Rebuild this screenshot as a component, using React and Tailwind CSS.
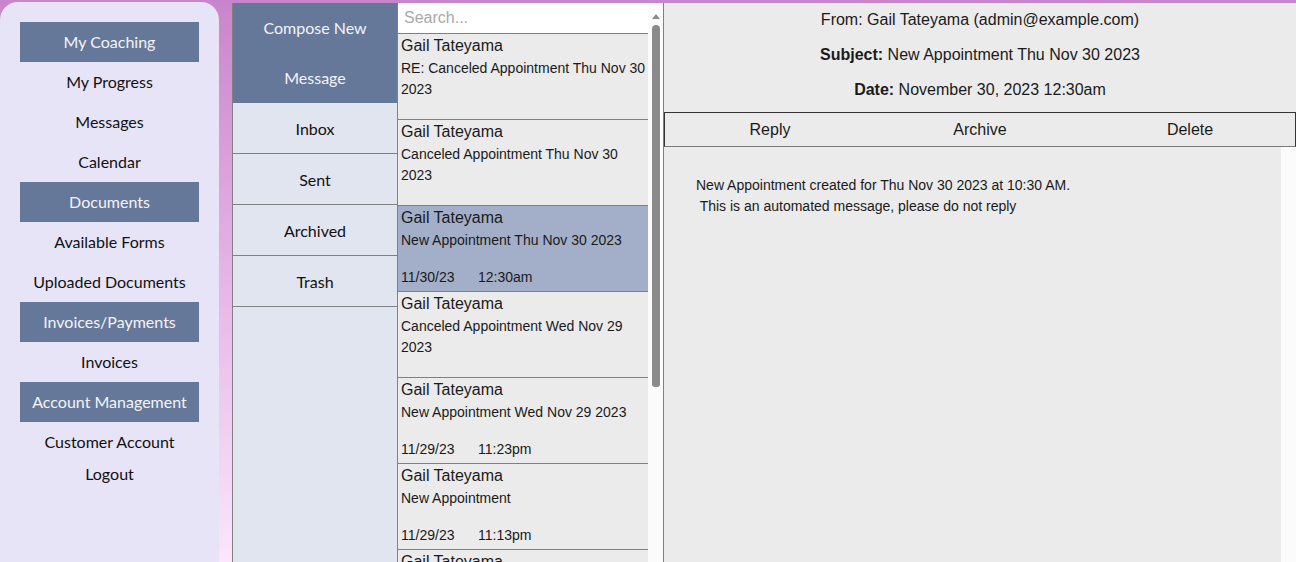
import React from "react";

const NAV = [
  { label: "My Coaching", head: true },
  { label: "My Progress" },
  { label: "Messages" },
  { label: "Calendar" },
  { label: "Documents", head: true },
  { label: "Available Forms" },
  { label: "Uploaded Documents" },
  { label: "Invoices/Payments", head: true },
  { label: "Invoices" },
  { label: "Account Management", head: true },
  { label: "Customer Account" },
];

const FOLDERS = ["Inbox", "Sent", "Archived", "Trash"];

const MESSAGES = [
  { from: "Gail Tateyama", subject: "RE: Canceled Appointment Thu Nov 30 2023" },
  { from: "Gail Tateyama", subject: "Canceled Appointment Thu Nov 30 2023" },
  { from: "Gail Tateyama", subject: "New Appointment Thu Nov 30 2023", date: "11/30/23", time: "12:30am", active: true },
  { from: "Gail Tateyama", subject: "Canceled Appointment Wed Nov 29 2023" },
  { from: "Gail Tateyama", subject: "New Appointment Wed Nov 29 2023", date: "11/29/23", time: "11:23pm" },
  { from: "Gail Tateyama", subject: "New Appointment", date: "11/29/23", time: "11:13pm" },
  { from: "Gail Tateyama", subject: "New Appointment Wed Nov 29 2023" },
];

const lato = "font-['Lato','Liberation_Sans',sans-serif]";
const arial = "font-['Liberation_Sans',Arial,sans-serif]";

export default function App() {
  return (
    <div className="h-[562px] w-[1296px] overflow-hidden flex bg-gradient-to-b from-[#c985cb] via-[#e6b5e6] to-[#fbe6fb]">
      {/* Sidebar */}
      <div className={`w-[219px] mt-[2px] rounded-t-[18px] bg-[#e8e4f8] pt-5 flex flex-col items-center text-[16px] text-[#111] ${lato}`}>
        {NAV.map((item) => (
          <div
            key={item.label}
            className={`w-[179px] h-10 flex items-center justify-center ${item.head ? "bg-[#65789a] text-[#f4f4f8]" : ""}`}
          >
            {item.label}
          </div>
        ))}
        <div className="h-6 flex items-center">Logout</div>
      </div>

      <div className="ml-[13px] mt-[3px] flex flex-1 min-w-0">
        {/* Folders */}
        <div className={`w-[166px] border-x border-[#808080] bg-[#e1e5ef] text-[16px] text-[#111] ${lato}`}>
          <div className="h-[100px] bg-[#65789a] text-[#f4f4f8] text-center leading-[50px]">
            Compose New
            <br />
            Message
          </div>
          {FOLDERS.map((f) => (
            <div key={f} className="h-[51px] border-b border-[#808080] flex items-center justify-center pt-[1px]">
              {f}
            </div>
          ))}
        </div>

        {/* Message list */}
        <div className={`w-[250px] flex flex-col ${arial}`}>
          <div className="h-[31px] shrink-0 bg-white border-b border-[#808080] pl-[6px] text-[16px] leading-[29px] text-[#a8a8a8]">
            Search...
          </div>
          {MESSAGES.map((m, i) => (
            <div
              key={i}
              className={`h-[86px] shrink-0 border-b border-[#808080] pl-[3px] pt-[1px] text-[#1a1a1a] ${m.active ? "bg-[#a3afc8]" : "bg-[#ebebeb]"}`}
            >
              <div className="h-[22px] text-[16px] leading-[22px]">{m.from}</div>
              <div className="h-[36px] mt-[1px] text-[14px] leading-[21px]">{m.subject}</div>
              {m.date && (
                <div className="mt-[1px] text-[14px] leading-[21px]">
                  <span className="inline-block w-[77px]">{m.date}</span>
                  {m.time}
                </div>
              )}
            </div>
          ))}
        </div>

        {/* Fake scrollbar */}
        <div className="w-[15px] bg-[#fbfbfb] flex flex-col items-center pt-[11px]">
          <div className="w-0 h-0 border-x-[4px] border-x-transparent border-b-[5px] border-b-[#8a8a8a]" />
          <div className="mt-[6px] w-[8px] h-[362px] rounded-t-[4px] rounded-b-[3px] bg-[#8a8a8a]" />
        </div>

        {/* Detail */}
        <div className={`flex-1 border-l border-[#808080] bg-[#ebebeb] flex flex-col text-[#1a1a1a] ${arial}`}>
          <div className="h-[109px] shrink-0 text-center text-[16px] leading-[35px]">
            <p className="-mt-[1.5px]">From: Gail Tateyama (admin@example.com)</p>
            <p>
              <b>Subject:</b> New Appointment Thu Nov 30 2023
            </p>
            <p>
              <b>Date:</b> November 30, 2023 12:30am
            </p>
          </div>
          <div className="h-[35px] shrink-0 grid grid-cols-3 border border-[#333] border-b-[#7a7a7a] text-[16px]">
            <div className="flex items-center justify-center pt-[1px]">Reply</div>
            <div className="flex items-center justify-center pt-[1px]">Archive</div>
            <div className="flex items-center justify-center pt-[1px]">Delete</div>
          </div>
          <div className="flex-1 flex">
            <div className="flex-1 pl-8 pt-[28px] text-[14px] leading-[21px]">
              <p>New Appointment created for Thu Nov 30 2023 at 10:30 AM.</p>
              <p className="whitespace-pre"> This is an automated message, please do not reply</p>
            </div>
            <div className="w-[15px] bg-[#fbfbfb]" />
          </div>
        </div>
      </div>
    </div>
  );
}
